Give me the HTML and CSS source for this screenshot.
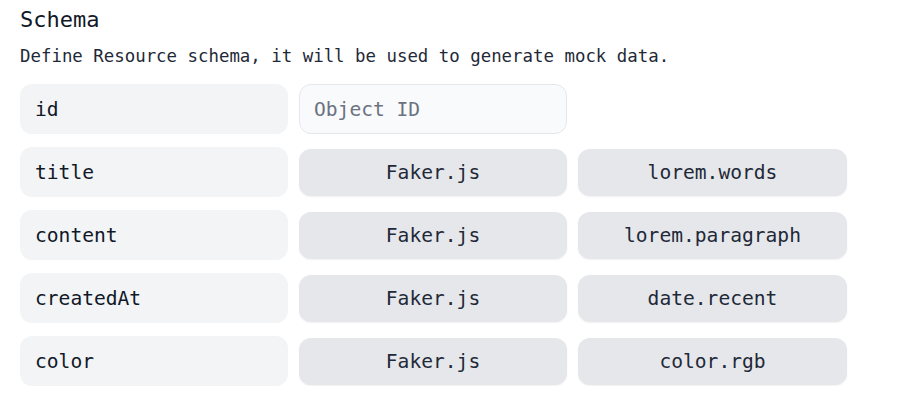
FILE: index.html
```html
<!DOCTYPE html>
<html>
<head>
<meta charset="utf-8">
<link rel="stylesheet" href="styles.css">
</head>
<body>
<section class="schema">
  <h2 class="title">Schema</h2>
  <p class="desc">Define Resource schema, it will be used to generate mock data.</p>
  <div class="grid">
    <div class="field">id</div>
    <div class="input">Object ID</div>
    <div class="empty"></div>

    <div class="field">title</div>
    <div class="btn">Faker.js</div>
    <div class="btn">lorem.words</div>

    <div class="field">content</div>
    <div class="btn">Faker.js</div>
    <div class="btn">lorem.paragraph</div>

    <div class="field">createdAt</div>
    <div class="btn">Faker.js</div>
    <div class="btn">date.recent</div>

    <div class="field">color</div>
    <div class="btn">Faker.js</div>
    <div class="btn">color.rgb</div>
  </div>
</section>
</body>
</html>
```
FILE: styles.css
```css
html, body {
  margin: 0;
  padding: 0;
  background: #ffffff;
}
body {
  font-family: "DejaVu Sans Mono", "Liberation Mono", monospace;
  color: #111827;
}
.schema {
  padding: 6px 0 0 20px;
  width: 827px;
}
.title {
  margin: 0;
  font-size: 22px;
  line-height: 28px;
  font-weight: 400;
  color: #111827;
}
.desc {
  margin: 10px 0 0 0;
  font-size: 17.4px;
  line-height: 24px;
  color: #1f2937;
}
.grid {
  margin-top: 16px;
  display: grid;
  grid-template-columns: 268px 268px 269px;
  column-gap: 11px;
  row-gap: 13px;
  grid-auto-rows: 50px;
}
.field, .input, .btn {
  font-size: 19.6px;
  display: flex;
  align-items: center;
  box-sizing: border-box;
  border-radius: 12px;
}
.field {
  background: #f3f4f6;
  padding-left: 15px;
  color: #111827;
}
.input {
  background: #f9fafb;
  border: 1px solid #e5e7eb;
  padding-left: 14px;
  color: #6b7280;
}
.btn {
  background: #e5e7eb;
  justify-content: center;
  color: #1f2937;
  height: 47px;
  align-self: center;
  margin-top: 1px;
  box-shadow: 0 1px 2px rgba(0, 0, 0, 0.06);
}
```
